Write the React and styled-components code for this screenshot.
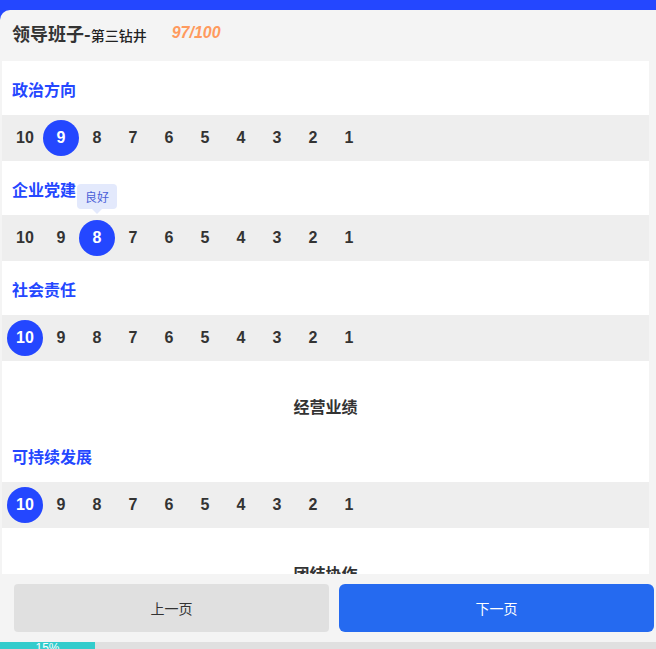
import React, { useState } from "react";
import styled, { createGlobalStyle } from "styled-components";

const BLUE = "#2447ff";
const SCORES = [10, 9, 8, 7, 6, 5, 4, 3, 2, 1];

const blocks = [
  { type: "item", title: "政治方向", value: 9 },
  { type: "item", title: "企业党建", value: 8, tip: "良好" },
  { type: "item", title: "社会责任", value: 10 },
  { type: "group", title: "经营业绩" },
  { type: "item", title: "可持续发展", value: 10 },
  { type: "group", title: "团结协作" },
  { type: "item", title: "班子建设", value: 9 },
];

export default function App() {
  const [values, setValues] = useState(blocks.map((b) => b.value));

  const pick = (index, score) => {
    const next = [...values];
    next[index] = score;
    setValues(next);
  };

  return (
    <>
      <GlobalStyle />
      <Page>
        <TopBar />
        <Panel>
          <Header>
            <Title>
              领导班子-<Sub>第三钻井</Sub>
            </Title>
            <Score>97/100</Score>
          </Header>
          <Scroll>
            {blocks.map((b, i) =>
              b.type === "group" ? (
                <GroupTitle key={i}>{b.title}</GroupTitle>
              ) : (
                <div key={i}>
                  <ItemTitle>{b.title}</ItemTitle>
                  <NumberRow>
                    {SCORES.map((s) => (
                      <Cell
                        key={s}
                        $active={values[i] === s}
                        onClick={() => pick(i, s)}
                      >
                        {s}
                        {b.tip && values[i] === s && <Tip>{b.tip}</Tip>}
                      </Cell>
                    ))}
                  </NumberRow>
                </div>
              )
            )}
          </Scroll>
          <Footer>
            <PrevBtn>上一页</PrevBtn>
            <NextBtn>下一页</NextBtn>
          </Footer>
          <Progress>
            <ProgressFill style={{ width: "95px" }}>15%</ProgressFill>
          </Progress>
        </Panel>
      </Page>
    </>
  );
}

const GlobalStyle = createGlobalStyle`
  body {
    margin: 0;
    overflow: hidden;
    font-family: "Noto Sans CJK SC", "Liberation Sans", sans-serif;
  }
`;

const Page = styled.div`
  height: calc(100vh + 9px);
  display: flex;
  flex-direction: column;
  background: ${BLUE};
`;

const TopBar = styled.div`
  height: 10px;
  flex: none;
`;

const Panel = styled.div`
  flex: 1;
  min-height: 0;
  display: flex;
  flex-direction: column;
  background: #f4f4f4;
  border-top-left-radius: 10px;
`;

const Header = styled.div`
  height: 51px;
  box-sizing: border-box;
  flex: none;
  display: flex;
  align-items: center;
  padding: 0 12px 5px;
  gap: 25px;
`;

const Title = styled.div`
  font-size: 18px;
  font-weight: bold;
  color: #333;
`;

const Sub = styled.span`
  font-size: 14px;
  font-weight: 500;
  color: #222;
`;

const Score = styled.span`
  font-family: "Liberation Sans", sans-serif;
  font-style: italic;
  font-weight: bold;
  font-size: 16px;
  color: #ff9a5e;
`;

const Scroll = styled.div`
  flex: 1;
  min-height: 0;
  overflow: hidden;
  background: #fff;
  margin: 0 7px 0 2px;
`;

const ItemTitle = styled.div`
  padding: 18px 10px 16px;
  line-height: 20px;
  font-size: 16px;
  font-weight: bold;
  color: ${BLUE};
`;

const GroupTitle = styled.div`
  padding: 35px 0 12px;
  line-height: 20px;
  font-size: 16px;
  font-weight: bold;
  color: #333;
  text-align: center;
`;

const NumberRow = styled.div`
  height: 46px;
  display: flex;
  align-items: center;
  padding-left: 5px;
  background: #eee;
`;

const Cell = styled.div`
  position: relative;
  width: 36px;
  height: 36px;
  border-radius: 50%;
  display: flex;
  align-items: center;
  justify-content: center;
  font-family: "Liberation Sans", sans-serif;
  font-weight: bold;
  font-size: 16px;
  color: ${(p) => (p.$active ? "#fff" : "#333")};
  background: ${(p) => (p.$active ? BLUE : "transparent")};
  cursor: pointer;
`;

const Tip = styled.div`
  position: absolute;
  left: 50%;
  bottom: calc(100% + 11px);
  transform: translateX(-50%);
  width: 40px;
  height: 25px;
  line-height: 25px;
  text-align: center;
  border-radius: 4px;
  background: #e3e9fc;
  color: #4a5fd8;
  font-family: "Noto Sans CJK SC", sans-serif;
  font-weight: normal;
  font-size: 12px;

  &::after {
    content: "";
    position: absolute;
    left: 50%;
    top: 100%;
    margin-left: -5px;
    border: 5px solid transparent;
    border-top-color: #e3e9fc;
  }
`;

const Footer = styled.div`
  flex: none;
  display: flex;
  gap: 10px;
  padding: 10px 2px 10px 14px;
`;

const Button = styled.button`
  flex: 1;
  height: 48px;
  border: none;
  font-family: "Noto Sans CJK SC", sans-serif;
  font-size: 14px;
`;

const PrevBtn = styled(Button)`
  background: #e0e0e0;
  color: #333;
  border-radius: 4px;
`;

const NextBtn = styled(Button)`
  background: #256af0;
  color: #fff;
  border-radius: 6px;
`;

const Progress = styled.div`
  flex: none;
  height: 16px;
  background: #e0e0e0;
`;

const ProgressFill = styled.div`
  height: 100%;
  background: #33cccc;
  color: #fff;
  font-size: 12px;
  line-height: 13px;
  text-align: center;
  font-family: "Liberation Sans", sans-serif;
`;
